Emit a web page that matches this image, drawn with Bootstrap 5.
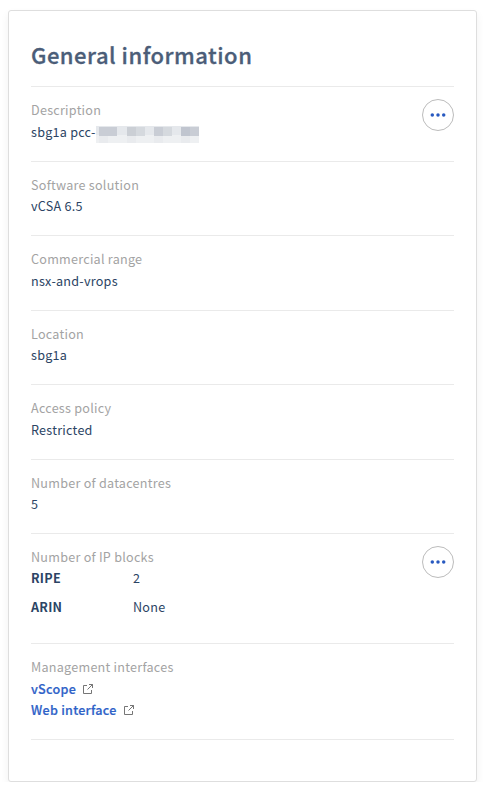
<!DOCTYPE html>
<html lang="en">
<head>
<meta charset="utf-8">
<meta name="viewport" content="width=device-width, initial-scale=1">
<title>General information</title>
<link href="https://cdn.jsdelivr.net/npm/bootstrap@5.3.0/dist/css/bootstrap.min.css" rel="stylesheet">
<style>
body{font-family:"Noto Sans CJK SC","Noto Sans",sans-serif;font-size:12.6px;line-height:21.5px;color:#2b4464;letter-spacing:.25px;background:#fff;overflow:hidden}
.info-card{margin:10px 10px 0 8px;height:772px;padding:0 22px;border:1px solid #dedede;border-radius:3px;box-shadow:0 4px 8px rgba(0,0,0,.06)}
.info-title{height:76px;padding-top:27px;font-size:22px;line-height:32px;font-weight:500;color:#4b5d78;border-bottom:1px solid #eaeaea;letter-spacing:.5px;-webkit-text-stroke:.3px #4b5d78}
.info-item{height:74.5px;padding-top:12px;border-bottom:1px solid #eaeaea}
.info-ip{height:110px}
.info-links{height:96px}
.info-item dt{font-weight:400;color:#a3a3a3}
.ip-name{width:102px;font-weight:700}
.ip-list{margin-top:-.5px}
.ip-second{margin-top:7.5px}
.menu-btn{width:32px;height:32px;background:#fff;border:1px solid #bcbcbc;color:#2859c0}
.info-links a{color:#2f62c8;font-weight:500;-webkit-text-stroke:.2px #2f62c8}
.masked{margin-top:5px}
.ext-icon{margin-left:7px;margin-top:1px}
</style>
</head>
<body>
<main class="info-card bg-white">
<h1 class="info-title mb-0">General information</h1>
<dl class="mb-0">
<div class="info-item d-flex justify-content-between">
<div><dt>Description</dt><dd class="mb-0 d-flex"><span>sbg1a pcc-</span>
<svg class="masked" width="103" height="17" shape-rendering="crispEdges" aria-hidden="true"><path fill="#e5e8ec" d="M0 0h103v10H0z"/><path fill="#eef0f2" d="M0 9h103v8H0z"/><path fill="#c9cdd5" d="M3 1h18v9H3zM58 1h9v9h-9zM94 1h9v9h-9z"/><path fill="#cbcfd5" d="M31 1h9v9h-9z"/><path fill="#d5d9de" d="M40 1h9v9h-9zM67 1h9v9h-9z"/><path fill="#c0c5cf" d="M85 1h9v9h-9z"/><path fill="#e9ebee" d="M3 10h9v7H3zM31 10h9v7h-9zM58 10h9v7h-9zM85 10h9v7h-9z"/></svg></dd></div>
<button class="menu-btn rounded-circle p-0 d-flex align-items-center justify-content-center" aria-label="Description actions"><svg width="16" height="4" fill="currentColor"><circle cx="2.3" cy="2" r="1.75"/><circle cx="8" cy="2" r="1.75"/><circle cx="13.7" cy="2" r="1.75"/></svg></button>
</div>
<div class="info-item"><dt>Software solution</dt><dd class="mb-0">vCSA 6.5</dd></div>
<div class="info-item"><dt>Commercial range</dt><dd class="mb-0">nsx-and-vrops</dd></div>
<div class="info-item"><dt>Location</dt><dd class="mb-0">sbg1a</dd></div>
<div class="info-item"><dt>Access policy</dt><dd class="mb-0">Restricted</dd></div>
<div class="info-item"><dt>Number of datacentres</dt><dd class="mb-0">5</dd></div>
<div class="info-item info-ip d-flex justify-content-between">
<div><dt>Number of IP blocks</dt><dd class="mb-0 ip-list"><div class="d-flex"><span class="ip-name">RIPE</span><span>2</span></div><div class="d-flex ip-second"><span class="ip-name">ARIN</span><span>None</span></div></dd></div>
<button class="menu-btn rounded-circle p-0 d-flex align-items-center justify-content-center" aria-label="IP block actions"><svg width="16" height="4" fill="currentColor"><circle cx="2.3" cy="2" r="1.75"/><circle cx="8" cy="2" r="1.75"/><circle cx="13.7" cy="2" r="1.75"/></svg></button>
</div>
<div class="info-item info-links"><dt>Management interfaces</dt><dd class="mb-0">
<div class="d-flex align-items-center"><a href="#" class="text-decoration-none">vScope</a><svg class="ext-icon" width="10" height="10" viewBox="0 0 10 10" fill="none" stroke="#666" stroke-width=".9"><path d="M4 1.5H.5v8h8V6M6 .5h3.5V4M9.5.5l-5 5"/></svg></div>
<div class="d-flex align-items-center"><a href="#" class="text-decoration-none">Web interface</a><svg class="ext-icon" width="10" height="10" viewBox="0 0 10 10" fill="none" stroke="#666" stroke-width=".9"><path d="M4 1.5H.5v8h8V6M6 .5h3.5V4M9.5.5l-5 5"/></svg></div>
</dd></div>
</dl>
</main>
<script src="https://cdn.jsdelivr.net/npm/bootstrap@5.3.0/dist/js/bootstrap.bundle.min.js"></script>
</body>
</html>
